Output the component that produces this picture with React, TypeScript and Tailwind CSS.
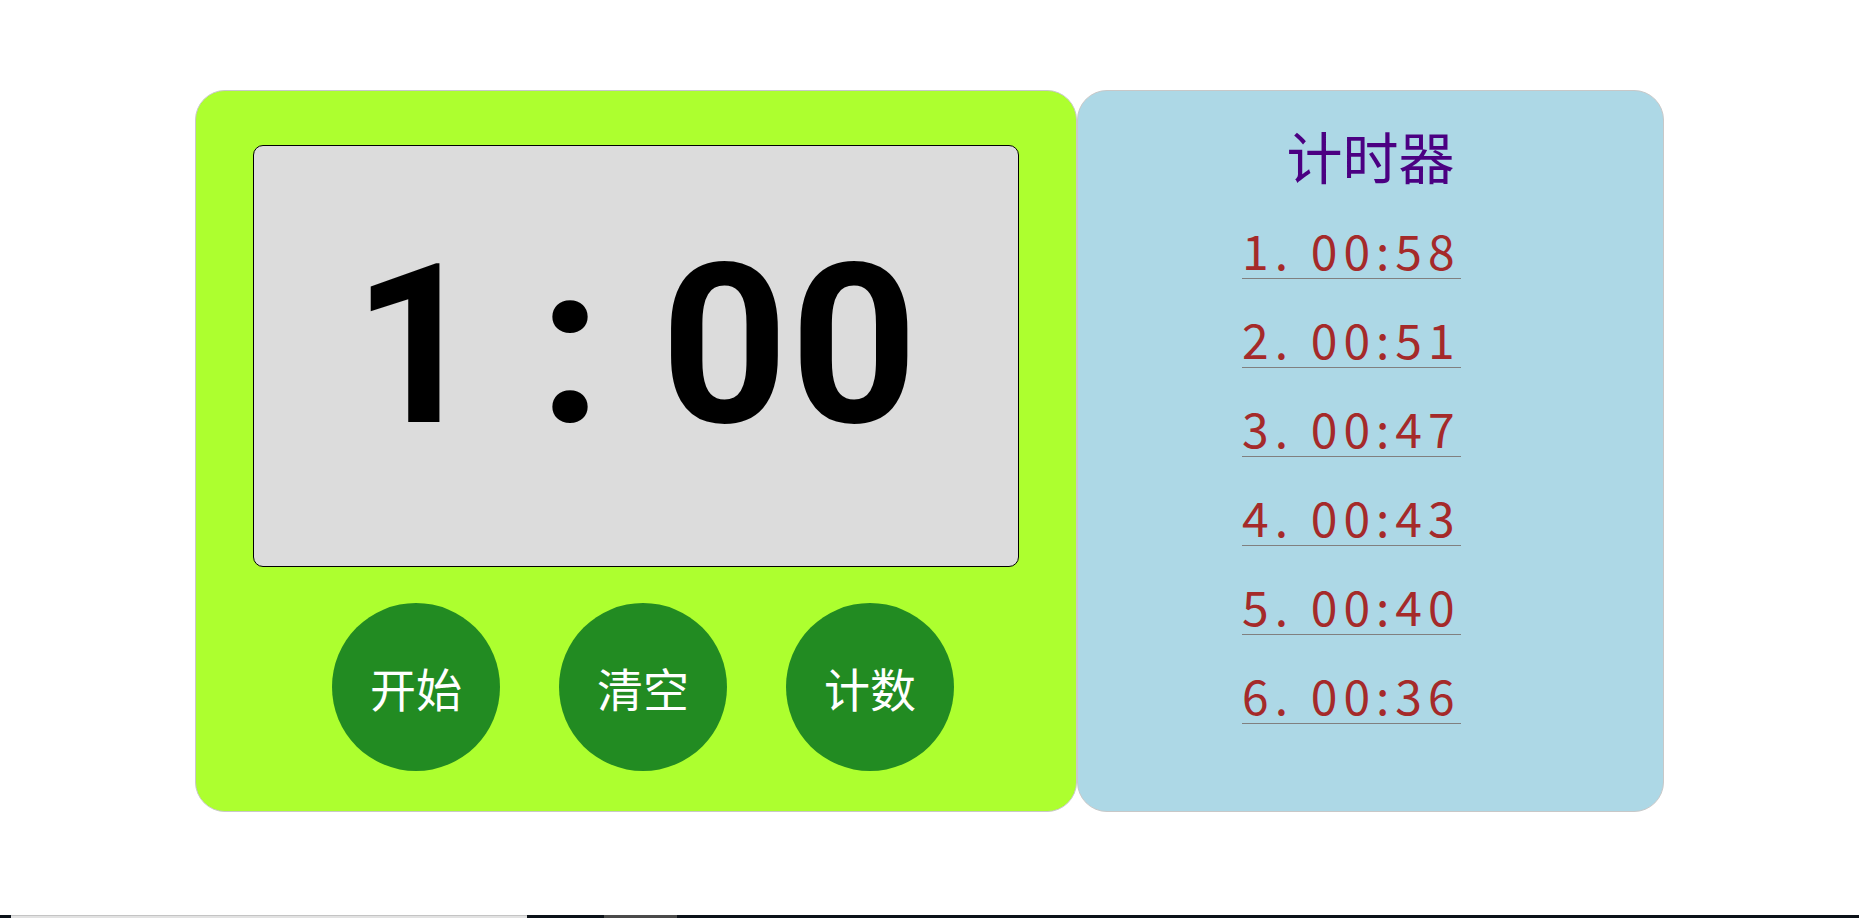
import React from 'react';

const records = ['00:58', '00:51', '00:47', '00:43', '00:40', '00:36'];

const cjk = { fontFamily: '"Noto Sans CJK SC", "Noto Sans", sans-serif' };

const App = () => {
  return (
    <div className="h-[918px] w-full flex flex-col bg-white overflow-hidden">
      {/* Main area */}
      <div className="flex-1 flex justify-center pt-[90px]">
        {/* Timer panel */}
        <div className="w-[882px] h-[722px] bg-[#adff2f] border border-[#c8c8c8] rounded-[30px] flex flex-col items-center pt-[54px]">
          <div className="w-[766px] h-[422px] bg-[#dcdcdc] border border-black rounded-[10px] flex flex-col items-center pt-[89px]">
            <span className="font-['Roboto',sans-serif] text-[222px] leading-none font-bold text-black whitespace-pre tracking-[2px]">
              1 : 00
            </span>
          </div>
          <div className="flex gap-[59px] mt-[36px] pl-[14px]">
            {['开始', '清空', '计数'].map((label) => (
              <button
                key={label}
                className="w-[168px] h-[168px] rounded-full bg-[#228b22] text-white text-[46px] leading-none flex items-center justify-center"
                style={cjk}
              >
                {label}
              </button>
            ))}
          </div>
        </div>

        {/* Records panel */}
        <div className="w-[587px] h-[722px] bg-[#add8e6] border border-[#c8c8c8] rounded-[30px] flex flex-col items-center pt-[36px]">
          <h1 className="text-[56px] leading-none text-[#4b0082] font-normal" style={cjk}>
            计时器
          </h1>
          <div className="w-full flex flex-col items-start pl-[164px] mt-[42px] gap-[35px]">
            {records.map((t, i) => (
              <div
                key={i}
                className="text-[48px] leading-none text-[#a52a2a] tracking-[6px] pb-[5px] border-b border-[#808080] whitespace-pre"
                style={cjk}
              >
                {`${i + 1}. ${t}`}
              </div>
            ))}
          </div>
        </div>
      </div>

      {/* Bottom strip */}
      <div className="h-[3px] flex">
        <div className="w-[11px] bg-[#0b1118]" />
        <div className="w-[516px] bg-[#e2e2e2] border-t border-[#c4c4c4]" />
        <div className="w-[77px] bg-[#0b1118]" />
        <div className="w-[73px] bg-[#4a4a4a]" />
        <div className="flex-1 bg-[#0b1118]" />
      </div>
    </div>
  );
};

export default App;
